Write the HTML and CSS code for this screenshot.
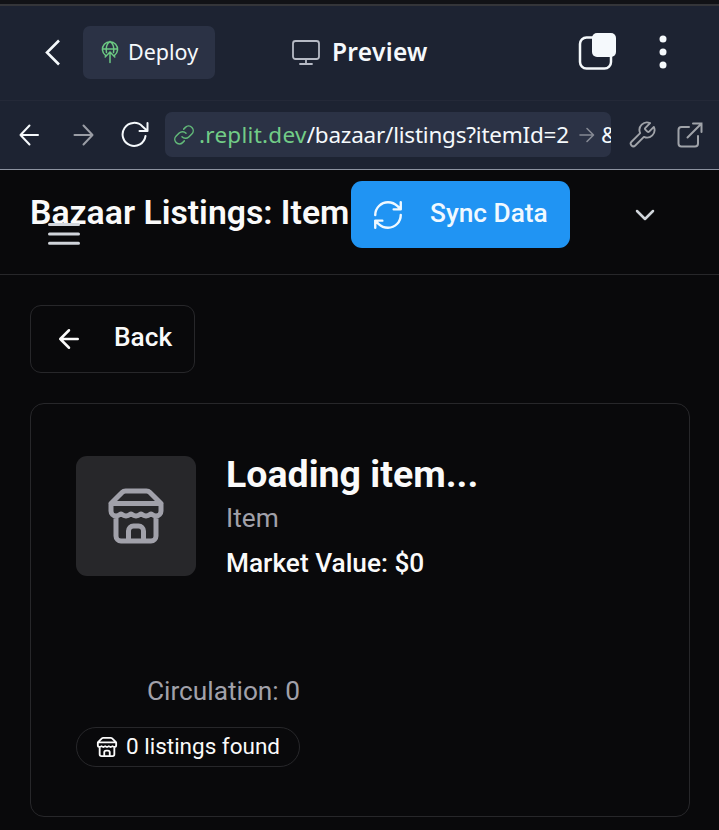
FILE: index.html
```html
<!DOCTYPE html>
<html lang="en">
<head>
<meta charset="utf-8">
<title>Bazaar Listings</title>
<link rel="stylesheet" href="styles.css">
</head>
<body>
<div class="strip"></div>
<header class="toolbar">
  <svg class="chevron" width="20" height="30" viewBox="0 0 20 30"><path d="M16 3.5 4 15.5 16 27.5"/></svg>
  <button class="deploy">
    <svg width="18" height="24" viewBox="0 0 18 24"><path d="M4.5 15.4A7.6 7.6 0 1 1 13.5 15.4M1.5 9h15M5.5 12.5C4.3 8 6 3 9 1.5 12 3 13.7 8 12.5 12.5M9 22.5V12M4.2 17 9 12l4.8 5"/></svg>
    <span>Deploy</span>
  </button>
  <div class="tab">
    <svg width="28" height="27" viewBox="0 0 28 27"><rect x="1" y="2" width="26" height="18" rx="2.5"/><path d="M14 20v5M8 25h12"/></svg>
    <span>Preview</span>
  </div>
  <svg class="windows" width="38" height="38" viewBox="0 0 38 38"><rect class="back" x="2" y="5.5" width="31" height="31" rx="6.5"/><rect class="front" x="14" y="1" width="24" height="24" rx="5"/></svg>
  <svg class="dots" width="8" height="36" viewBox="0 0 8 36"><circle cx="4" cy="5" r="3.5"/><circle cx="4" cy="18" r="3.5"/><circle cx="4" cy="31" r="3.5"/></svg>
</header>
<nav class="address">
  <svg class="prev" width="22" height="22" viewBox="0 0 22 22"><path d="M19 11H1.500M10.500 1.500 1.500 11l9 9.500"/></svg>
  <svg class="next" width="22" height="22" viewBox="0 0 22 22"><path d="M1.500 11H19M10.500 1.500l9 9.500-9 9.500"/></svg>
  <svg class="reload" width="30" height="28" viewBox="0 0 30 28"><path d="M24.500 15A11.500 11.500 0 1 1 21.500 5.500L26.500 10M26.500 2v8h-8"/></svg>
  <div class="url">
    <svg class="link" width="20" height="22" viewBox="0 0 20 22"><path d="M8 12.800a4.700 4.700 0 0 0 6.800.2l3-3a4.500 4.500 0 0 0-6.400-6.600L9.700 5.100M12 9.200A4.700 4.700 0 0 0 5.200 9l-3 3a4.500 4.500 0 0 0 6.400 6.600l1.700-1.700"/></svg>
    <span class="host">.replit.dev</span><span class="path">/bazaar/listings?itemId=2</span>
    <svg class="go" width="16" height="16" viewBox="0 0 16 16"><path d="M1 8h13M8 1.500 14.500 8 8 14.500"/></svg>
    <span class="more">&amp;</span>
  </div>
  <svg class="wrench" width="30" height="30" viewBox="0 0 24 24"><path d="M14.700 6.300a1 1 0 0 0 0 1.400l1.600 1.600a1 1 0 0 0 1.400 0l3.770-3.770a6 6 0 0 1-7.940 7.940l-6.910 6.910a2.120 2.120 0 0 1-3-3l6.910-6.910a6 6 0 0 1 7.940-7.940l-3.760 3.760z"/></svg>
  <svg class="external" width="26" height="26" viewBox="0 0 26 26"><path d="M12 5H4.500A3 3 0 0 0 1.500 8v13.500a3 3 0 0 0 3 3H18a3 3 0 0 0 3-3V14M10.500 15.500 24.500 1.500M16 1.500h8.500V10"/></svg>
</nav>
<main>
  <div class="page-head">
    <h1>Bazaar Listings: Item</h1>
    <svg class="menu" width="32" height="24" viewBox="0 0 32 24"><path d="M1.500 2.500h29M1.500 12h29M1.500 21.200h29"/></svg>
    <button class="sync">
      <svg width="34" height="34" viewBox="0 0 24 24"><path d="M3 12a9 9 0 0 1 9-9 9.750 9.750 0 0 1 6.740 2.740L21 8M21 3v5h-5M21 12a9 9 0 0 1-9 9 9.750 9.750 0 0 1-6.740-2.740L3 16M8 16H3v5"/></svg>
      <span>Sync Data</span>
    </button>
    <svg class="down" width="20" height="12" viewBox="0 0 20 12"><path d="m2 2 8 8 8-8"/></svg>
  </div>
  <div class="content">
    <button class="back-btn">
      <svg width="30" height="30" viewBox="0 0 24 24"><path d="m12 19-7-7 7-7M19 12H5"/></svg>
      <span>Back</span>
    </button>
    <section class="card">
      <div class="item">
        <div class="thumb">
          <svg width="60" height="60" viewBox="0 0 24 24"><path d="m2 7 4.410-4.410A2 2 0 0 1 7.830 2h8.340a2 2 0 0 1 1.420.590L22 7M4 12v8a2 2 0 0 0 2 2h12a2 2 0 0 0 2-2v-8M15 22v-4a2 2 0 0 0-2-2h-2a2 2 0 0 0-2 2v4M2 7h20M22 7v3a2 2 0 0 1-2 2a2.700 2.700 0 0 1-1.590-.630.700.700 0 0 0-.820 0A2.700 2.700 0 0 1 16 12a2.700 2.700 0 0 1-1.590-.630.700.700 0 0 0-.820 0A2.700 2.700 0 0 1 12 12a2.700 2.700 0 0 1-1.590-.630.700.700 0 0 0-.820 0A2.700 2.700 0 0 1 8 12a2.700 2.700 0 0 1-1.590-.630.700.700 0 0 0-.820 0A2.700 2.700 0 0 1 4 12a2 2 0 0 1-2-2V7"/></svg>
        </div>
        <div class="info">
          <h2>Loading item...</h2>
          <p class="kind">Item</p>
          <p class="value">Market Value: $0</p>
        </div>
      </div>
      <div class="stats">
        <p class="circulation">Circulation: 0</p>
        <div class="badge">
          <svg width="22" height="22" viewBox="0 0 24 24"><path d="m2 7 4.410-4.410A2 2 0 0 1 7.830 2h8.340a2 2 0 0 1 1.420.590L22 7M4 12v8a2 2 0 0 0 2 2h12a2 2 0 0 0 2-2v-8M15 22v-4a2 2 0 0 0-2-2h-2a2 2 0 0 0-2 2v4M2 7h20M22 7v3a2 2 0 0 1-2 2a2.700 2.700 0 0 1-1.590-.630.700.700 0 0 0-.820 0A2.700 2.700 0 0 1 16 12a2.700 2.700 0 0 1-1.590-.630.700.700 0 0 0-.820 0A2.700 2.700 0 0 1 12 12a2.700 2.700 0 0 1-1.590-.630.700.700 0 0 0-.820 0A2.700 2.700 0 0 1 8 12a2.700 2.700 0 0 1-1.590-.630.700.700 0 0 0-.820 0A2.700 2.700 0 0 1 4 12a2 2 0 0 1-2-2V7"/></svg>
          <span>0 listings found</span>
        </div>
      </div>
    </section>
  </div>
</main>
</body>
</html>
```
FILE: styles.css
```css
* { box-sizing: border-box; }
body {
  margin: 0;
  height: 830px;
  overflow: hidden;
  background: #09090b;
  color: #fafafa;
  font-family: Roboto, sans-serif;
}
h1, h2, p { margin: 0; white-space: nowrap; }
button { border: 0; margin: 0; padding: 0; font: inherit; color: inherit; }
svg { display: block; flex: none; fill: none; stroke: currentColor; stroke-width: 2; stroke-linecap: round; stroke-linejoin: round; }
span { white-space: nowrap; }

.strip { height: 6px; background: #111216; border-bottom: 2px solid #343539; }

.toolbar {
  display: flex;
  align-items: center;
  height: 95px;
  padding: 0 51px 2px 43px;
  background: #1d2332;
  border-bottom: 1px solid #242938;
  color: #f5f9fc;
  font-family: "Noto Sans", sans-serif;
}
.chevron { stroke-width: 2.6; stroke-linecap: butt; stroke-linejoin: miter; }
.deploy {
  display: flex;
  align-items: center;
  gap: 9px;
  width: 132px;
  height: 53px;
  margin-left: 20px;
  padding-left: 18px;
  border-radius: 7px;
  background: #2b3245;
  font-size: 21.5px;
}
.deploy svg { color: #6cc983; stroke-width: 1.5; }
.deploy span, .tab span { padding-bottom: 2px; }
.tab { display: flex; align-items: center; gap: 12px; width: 287px; margin-left: 77px; font-size: 24.5px; font-weight: 600; letter-spacing: .3px; }
.tab svg { color: #b6bac5; stroke-width: 1.8; }
.windows { margin: -1px 0 1px -1px; stroke-width: 2.5; }
.windows .front { fill: #f5f9fc; stroke: none; }
.dots { margin-left: 43px; fill: #f5f9fc; stroke: none; }

.address {
  display: flex;
  align-items: center;
  height: 69px;
  padding: 0 0 1px 19px;
  background: #1d2332;
  border-bottom: 1px solid #8c92a0;
  color: #f5f9fc;
  font-family: "Noto Sans", sans-serif;
}
.next { margin-left: 32px; color: #9a9da5; }
.reload { margin-left: 26px; }
.url {
  display: flex;
  flex: none;
  align-items: center;
  width: 446px;
  height: 45px;
  margin-left: 14px;
  padding-left: 9px;
  border-radius: 7px;
  background: #2b3245;
  font-size: 22.5px;
  overflow: hidden;
}
.link { color: #62b979; stroke-width: 1.5; }
.host { margin-left: 5px; color: #72cc87; letter-spacing: .27px; }
.path { letter-spacing: -.22px; }
.go { margin-left: 10px; color: #858994; stroke-width: 1.6; }
.more { margin-left: 6px; }
.wrench { margin-left: 16px; color: #a0a3a9; stroke-width: 1.5; }
.external { margin-left: 20px; color: #a0a3a9; stroke-linejoin: miter; }

.page-head {
  position: relative;
  display: flex;
  align-items: flex-start;
  height: 105px;
  padding: 11px 0 0 30px;
  border-bottom: 1px solid #27272a;
}
h1 { width: 321px; font-size: 33.75px; font-weight: 600; line-height: 63px; }
.menu { position: absolute; left: 48px; top: 52px; color: #d1d5db; stroke-width: 3; }
.sync {
  display: flex;
  align-items: center;
  gap: 25px;
  width: 219px;
  height: 67px;
  padding-left: 20px;
  border-radius: 11px;
  background: #2094f3;
  color: #f0f9ff;
  font-size: 26.25px;
  font-weight: 500;
}
.sync svg { stroke-width: 1.7; }
.sync span { padding-bottom: 3px; }
.back-btn span { padding-bottom: 4px; }
.down { margin: 28px 0 0 65px; color: #d1d5db; stroke-width: 2.5; }

.content { padding: 30px 29px 0 30px; }
.back-btn {
  display: flex;
  align-items: center;
  gap: 30px;
  width: 165px;
  height: 68px;
  padding-left: 23px;
  border: 1px solid #27272a;
  border-radius: 11px;
  background: transparent;
  font-size: 26.25px;
  font-weight: 500;
}
.card {
  height: 414px;
  margin-top: 30px;
  padding: 52px 45px 0;
  border: 1px solid #27272a;
  border-radius: 14px;
}
.item { display: flex; gap: 30px; height: 214px; }
.thumb {
  display: grid;
  place-items: center;
  width: 120px;
  height: 120px;
  border-radius: 11px;
  background: #27272a;
  color: #a1a1aa;
}
.info { margin-top: -1px; }
h2 { font-size: 37.5px; font-weight: 700; line-height: 38px; }
.kind { margin-top: 6px; color: #a1a1aa; font-size: 26.25px; line-height: 38px; }
.value { margin-top: 7px; font-size: 26.25px; font-weight: 500; line-height: 38px; }
.stats { display: flex; flex-direction: column; width: 224px; }
.circulation { align-self: flex-end; height: 57px; padding-top: 2px; color: #a1a1aa; font-size: 26.25px; line-height: 38px; }
.badge {
  display: flex;
  align-items: center;
  gap: 8px;
  height: 40px;
  padding-left: 19px;
  border: 1px solid #27272a;
  border-radius: 20px;
  font-size: 22.5px;
}
.badge span { padding-bottom: 2px; }
```
